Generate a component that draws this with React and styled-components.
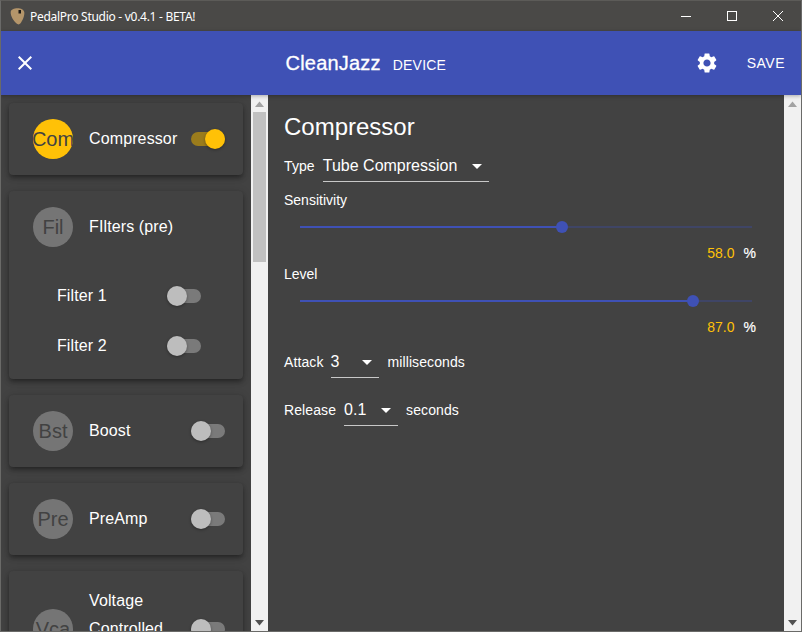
import React from "react";
import styled, { createGlobalStyle } from "styled-components";
import { MdClose, MdSettings } from "react-icons/md";

const Global = createGlobalStyle`
  html, body { margin: 0; padding: 0; background: #424242; overflow: hidden; }
  * { box-sizing: border-box; }
`;

const Frame = styled.div`
  width: 802px;
  height: 632px;
  display: flex;
  flex-direction: column;
  border: 1px solid #6a6a68;
  border-top: 1px solid #5c5b58;
  font-family: "Liberation Sans", Arial, sans-serif;
  color: #fff;
  overflow: hidden;
`;

const TitleBar = styled.div`
  height: 30px;
  flex: none;
  background: #4a4947;
  display: flex;
  align-items: center;
  padding-left: 9px;
  font-family: "Noto Sans", "Open Sans", sans-serif;
  font-size: 12px;
  letter-spacing: -0.28px;
  color: #fff;
`;
const TitleText = styled.span`
  margin-left: 5px;
  flex: 1;
`;
const WinButton = styled.div`
  width: 46px;
  height: 30px;
  display: flex;
  align-items: center;
  justify-content: center;
`;

const AppBar = styled.header`
  height: 64px;
  flex: none;
  background: #3f51b5;
  display: flex;
  align-items: center;
  padding: 0 16px 0 12px;
  position: relative;
  z-index: 2;
  box-shadow: 0 1px 4px rgba(0, 0, 0, 0.3);
`;
const HeaderCenter = styled.div`
  flex: 1;
  display: flex;
  align-items: baseline;
  justify-content: center;
  gap: 12px;
`;
const HeaderTitle = styled.span`
  font-size: 20px;
  font-weight: 500;
  letter-spacing: 0.2px;
  -webkit-text-stroke: 0.3px #fff;
`;
const HeaderSub = styled.span`
  font-size: 14px;
  letter-spacing: 0.2px;
`;
const IconSlot = styled.div`
  width: 24px;
  height: 24px;
  display: flex;
`;
const SaveLabel = styled.span`
  font-size: 14px;
  letter-spacing: 0.5px;
  margin-left: 28px;
`;

const Body = styled.div`
  flex: 1;
  min-height: 0;
  display: flex;
  background: #424242;
`;
const Sidebar = styled.aside`
  width: 250px;
  flex: none;
  overflow: hidden;
  padding: 8px 8px 0;
  display: flex;
  flex-direction: column;
  gap: 16px;
`;
const Card = styled.section`
  flex: none;
  width: 234px;
  background: #424242;
  border-radius: 4px;
  box-shadow: 0 2px 4px -1px rgba(0,0,0,.28), 0 4px 5px 0 rgba(0,0,0,.18), 0 1px 10px 0 rgba(0,0,0,.14);
  padding-bottom: ${(p) => p.$bottom || 0}px;
`;
const Row = styled.div`
  display: flex;
  align-items: center;
  padding: 16px 18px 16px 24px;
`;
const SubList = styled.div`
  padding-top: 8px;
`;
const SubRow = styled.div`
  height: 50px;
  display: flex;
  align-items: center;
  padding: 0 42px 0 48px;
  font-size: 16px;
  letter-spacing: 0.1px;
`;
const SubLabel = styled.span`
  flex: 1;
`;
const Avatar = styled.div`
  width: 40px;
  height: 40px;
  flex: none;
  border-radius: 50%;
  overflow: hidden;
  display: flex;
  align-items: center;
  justify-content: center;
  font-size: 20px;
  color: #424242;
  background: ${(p) => (p.$on ? "#ffc107" : "#757575")};
`;
const ItemLabel = styled.div`
  flex: 1;
  margin-left: 16px;
  font-size: 16px;
  letter-spacing: 0.12px;
  line-height: 28px;
  min-height: 28px;
`;
const Track = styled.div`
  width: 34px;
  height: 14px;
  flex: none;
  position: relative;
  border-radius: 7px;
  background: ${(p) => (p.$on ? "#9b7c1c" : "#7a7a7a")};
`;
const Thumb = styled.div`
  position: absolute;
  top: -3px;
  left: ${(p) => (p.$on ? 14 : 0)}px;
  width: 20px;
  height: 20px;
  border-radius: 50%;
  background: ${(p) => (p.$on ? "#ffc107" : "#bdbdbd")};
  box-shadow: 0 1px 3px rgba(0,0,0,.35);
`;

const ScrollBar = styled.div`
  width: 17px;
  flex: none;
  background: #f1f1f1;
  display: flex;
  flex-direction: column;
  align-items: center;
  padding-top: 6px;
`;
const ScrollThumb = styled.div`
  width: 13px;
  height: 150px;
  margin-top: 5px;
  background: #c1c1c1;
`;
const ScrollSpacer = styled.div`
  flex: 1;
`;
const ArrowBox = styled.div`
  height: 6px;
  display: flex;
  margin-bottom: ${(p) => p.$bottom || 0}px;
`;

const Main = styled.main`
  flex: 1;
  min-width: 0;
  padding: 16px 16px 0;
  font-size: 14px;
`;
const Heading = styled.h2`
  margin: 0;
  font-size: 24px;
  font-weight: 400;
  line-height: 32px;
`;
const InlineRow = styled.div`
  display: flex;
  align-items: center;
  height: 32px;
  margin-top: ${(p) => p.$top || 0}px;
  gap: ${(p) => p.$gap || 8}px;
  letter-spacing: 0.1px;
`;
const Select = styled.div`
  width: ${(p) => p.$width}px;
  height: 32px;
  display: flex;
  align-items: center;
  justify-content: space-between;
  font-size: 16px;
  letter-spacing: 0;
  padding-top: 1px;
  margin-left: ${(p) => (p.$nudge ? -1 : 0)}px;
  margin-right: ${(p) => (p.$nudge ? 1 : 0)}px;
  border-bottom: 1px solid #c8c8c8;
`;
const Caret = styled.div`
  width: 0;
  height: 0;
  margin-right: 7px;
  border-left: 5px solid transparent;
  border-right: 5px solid transparent;
  border-top: 5px solid #fff;
`;
const FieldLabel = styled.div`
  line-height: 16px;
  margin-top: ${(p) => p.$top || 0}px;
`;
const SliderWrap = styled.div`
  height: 22px;
  margin: 8px 16px 0;
  width: 452px;
  display: flex;
  align-items: center;
  position: relative;
`;
const Rail = styled.div`
  width: 100%;
  height: 2px;
  background: #3f4566;
`;
const Fill = styled.div`
  height: 2px;
  background: #3f51b5;
`;
const Knob = styled.div`
  position: absolute;
  top: 5px;
  width: 12px;
  height: 12px;
  margin-left: -6px;
  border-radius: 50%;
  background: #3f51b5;
`;
const ValueRow = styled.div`
  display: flex;
  justify-content: flex-end;
  gap: 9px;
  line-height: 16px;
  margin-top: 7px;
  padding-right: 12px;
`;
const Value = styled.span`
  color: #ffc107;
`;
const Unit = styled.span`
  -webkit-text-stroke: 0.2px #fff;
`;

const Pick = () => (
  <svg width="15" height="17" viewBox="0 0 15 17">
    <path d="M.7 4C1 1.500 4 .3 7.500.3c3.500 0 6.300 1.200 6.800 4 .4 3.500-1.800 8.500-4 11.300-.9 1-1.900 1-3 .3C4 14 .3 8 .7 4z" fill="#b4956a" />
    <rect x="8.500" y="2" width="2.500" height="3.500" fill="#1d1a16" />
  </svg>
);

const Toggle = ({ on }) => (
  <Track $on={on}>
    <Thumb $on={on} />
  </Track>
);

const Arrow = ({ down }) => (
  <svg width="9" height="6" viewBox="0 0 9 6">
    <path d={down ? "M0 0h9L4.500 5.500z" : "M4.500 .5L9 6H0z"} fill={down ? "#505050" : "#a3a3a3"} />
  </svg>
);

const Scroll = ({ thumb }) => (
  <ScrollBar>
    <ArrowBox>
      <Arrow />
    </ArrowBox>
    {thumb && <ScrollThumb />}
    <ScrollSpacer />
    <ArrowBox $bottom={5}>
      <Arrow down />
    </ArrowBox>
  </ScrollBar>
);

const Slider = ({ value }) => (
  <SliderWrap>
    <Rail>
      <Fill style={{ width: `${value}%` }} />
    </Rail>
    <Knob style={{ left: `${value}%` }} />
  </SliderWrap>
);

const Effect = ({ abbr, label, on, noToggle }) => (
  <Row>
    <Avatar $on={on}>{abbr}</Avatar>
    <ItemLabel>{label}</ItemLabel>
    {!noToggle && <Toggle on={on} />}
  </Row>
);

export default function App() {
  return (
    <>
      <Global />
      <Frame>
        <TitleBar>
          <Pick />
          <TitleText>PedalPro Studio - v0.4.1 - BETA!</TitleText>
          <WinButton>
            <svg width="10" height="10" viewBox="0 0 10 10">
              <path d="M0 5.500h10" stroke="#fff" strokeWidth="1" />
            </svg>
          </WinButton>
          <WinButton>
            <svg width="10" height="10" viewBox="0 0 10 10">
              <rect x=".5" y=".5" width="9" height="9" fill="none" stroke="#fff" />
            </svg>
          </WinButton>
          <WinButton>
            <svg width="10" height="10" viewBox="0 0 10 10">
              <path d="M0 0l10 10M10 0L0 10" stroke="#fff" strokeWidth="1" />
            </svg>
          </WinButton>
        </TitleBar>
        <AppBar>
          <IconSlot>
            <MdClose size={24} color="#fff" />
          </IconSlot>
          <HeaderCenter>
            <HeaderTitle>CleanJazz</HeaderTitle>
            <HeaderSub>DEVICE</HeaderSub>
          </HeaderCenter>
          <IconSlot>
            <MdSettings size={24} color="#fff" />
          </IconSlot>
          <SaveLabel>SAVE</SaveLabel>
        </AppBar>
        <Body>
          <Sidebar>
            <Card>
              <Effect abbr="Com" label="Compressor" on />
            </Card>
            <Card $bottom={8}>
              <Effect abbr="Fil" label="FIlters (pre)" noToggle />
              <SubList>
                <SubRow>
                  <SubLabel>Filter 1</SubLabel>
                  <Toggle />
                </SubRow>
                <SubRow>
                  <SubLabel>Filter 2</SubLabel>
                  <Toggle />
                </SubRow>
              </SubList>
            </Card>
            <Card>
              <Effect abbr="Bst" label="Boost" />
            </Card>
            <Card>
              <Effect abbr="Pre" label="PreAmp" />
            </Card>
            <Card>
              <Effect abbr="Vca" label={<>Voltage<br />Controlled<br />Amp</>} />
            </Card>
          </Sidebar>
          <Scroll thumb />
          <Main>
            <Heading>Compressor</Heading>
            <InlineRow $gap={8} $top={7}>
              Type
              <Select $width={166}>
                Tube Compression
                <Caret />
              </Select>
            </InlineRow>
            <FieldLabel $top={10}>Sensitivity</FieldLabel>
            <Slider value={58} />
            <ValueRow>
              <Value>58.0</Value>
              <Unit>%</Unit>
            </ValueRow>
            <FieldLabel $top={5}>Level</FieldLabel>
            <Slider value={87} />
            <ValueRow>
              <Value>87.0</Value>
              <Unit>%</Unit>
            </ValueRow>
            <InlineRow $top={11}>
              Attack
              <Select $width={48} $nudge>
                3
                <Caret />
              </Select>
              milliseconds
            </InlineRow>
            <InlineRow $top={16}>
              Release
              <Select $width={54}>
                0.1
                <Caret />
              </Select>
              seconds
            </InlineRow>
          </Main>
          <Scroll />
        </Body>
      </Frame>
    </>
  );
}
